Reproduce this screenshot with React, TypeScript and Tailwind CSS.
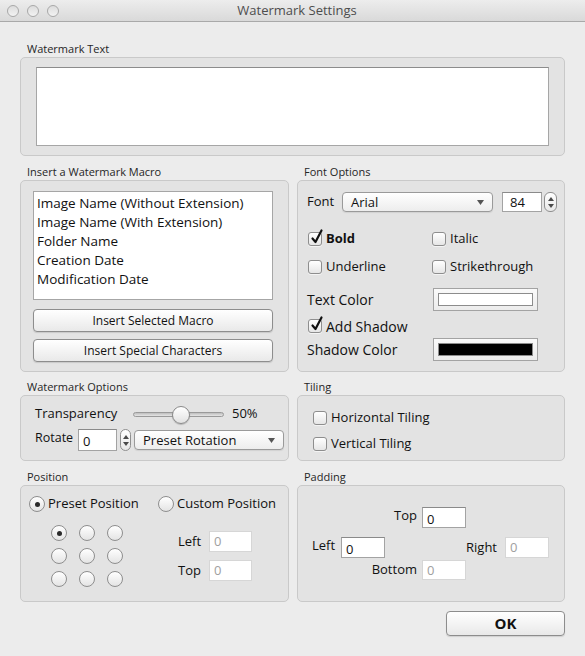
import React from 'react';

// --- Small Aqua-ish controls ---

const Checkbox: React.FC<{ checked?: boolean }> = ({ checked }) => (
  <span className="relative inline-block w-[14px] h-[14px] shrink-0 rounded-[3px] border border-[#8e8e8e] bg-gradient-to-b from-white to-[#e6e6e6] shadow-[0_1px_0_rgba(255,255,255,0.6)]">
    {checked && (
      <svg className="absolute left-[1px] top-[-4px]" width="14" height="16" viewBox="0 0 14 16">
        <path d="M2.5 9.5 L5.5 13 L11.5 1.5" fill="none" stroke="#111" strokeWidth="2.2" strokeLinecap="round" strokeLinejoin="round" />
      </svg>
    )}
  </span>
);

const Radio: React.FC<{ checked?: boolean }> = ({ checked }) => (
  <span className="inline-flex items-center justify-center w-[16px] h-[16px] shrink-0 rounded-full border border-[#8e8e8e] bg-gradient-to-b from-white to-[#e4e4e4]">
    {checked && <span className="w-[5px] h-[5px] rounded-full bg-[#2a2a2a]" />}
  </span>
);

const Stepper: React.FC<{ className?: string }> = ({ className = '' }) => (
  <span className={`flex flex-col items-center justify-center gap-[3px] rounded-[6px] border border-[#8f8f8f] bg-gradient-to-b from-white to-[#e8e8e8] ${className}`}>
    <svg width="6" height="4" viewBox="0 0 6 4"><path d="M0 4 L3 0 L6 4 Z" fill="#4a4a4a" /></svg>
    <svg width="6" height="4" viewBox="0 0 6 4"><path d="M0 0 L3 4 L6 0 Z" fill="#4a4a4a" /></svg>
  </span>
);

const Popup: React.FC<{ label: string; className?: string }> = ({ label, className = '' }) => (
  <span className={`flex items-center justify-between pl-[8px] pr-[8px] rounded-[4px] border border-[#9a9a9a] bg-gradient-to-b from-white to-[#ededed] shadow-[0_1px_1px_rgba(0,0,0,0.08)] text-[13px] leading-none text-[#111] ${className}`}>
    <span>{label}</span>
    <svg width="7" height="5" viewBox="0 0 7 5"><path d="M0 0 L7 0 L3.5 5 Z" fill="#555" /></svg>
  </span>
);

const Field: React.FC<{ value: string; disabled?: boolean; className?: string }> = ({ value, disabled, className = '' }) => (
  <span
    className={`flex items-center pl-[4px] bg-white border text-[13px] leading-none ${
      disabled
        ? 'border-[#d6d6d6] text-[#a0a0a0]'
        : 'border-[#a3a3a3] border-t-[#8a8a8a] text-[#111]'
    } ${className}`}
  >
    {value}
  </span>
);

const ColorWell: React.FC<{ color: string }> = ({ color }) => (
  <span className="flex items-center justify-center w-[105px] h-[23px] border border-[#a3a3a3] bg-gradient-to-b from-[#fafafa] to-[#ececec]">
    <span className="w-[95px] h-[13px] border border-[#8c8c8c]" style={{ backgroundColor: color }} />
  </span>
);

const Button: React.FC<{ label: string; className?: string }> = ({ label, className = '' }) => (
  <span className={`flex items-center justify-center rounded-[4px] border border-[#8d8d8d] bg-gradient-to-b from-white to-[#e9e9e9] shadow-[0_1px_1px_rgba(0,0,0,0.12)] text-[#111] ${className}`}>
    {label}
  </span>
);

// --- Group box with caption ---

const Group: React.FC<{ label: string; className?: string; boxClass?: string; children?: React.ReactNode }> = ({
  label,
  className = '',
  boxClass = '',
  children,
}) => (
  <div className={`flex flex-col ${className}`}>
    <div className="h-[16px] pl-[7px] text-[11px] leading-[16px] text-[#262626]">{label}</div>
    <div className={`rounded-[5px] border border-[#c9c9c9] bg-[#e3e3e3] ${boxClass}`}>{children}</div>
  </div>
);

const MACROS = [
  'Image Name (Without Extension)',
  'Image Name (With Extension)',
  'Folder Name',
  'Creation Date',
  'Modification Date',
];

export default function App() {
  return (
    <div
      className="w-[585px] h-[656px] bg-[#ececec] flex flex-col text-[#111] overflow-hidden"
      style={{ fontFamily: '"Open Sans", "DejaVu Sans", sans-serif' }}
    >
      {/* Title bar */}
      <div className="relative h-[22px] shrink-0 flex items-center border-b border-[#a9a9a9] bg-gradient-to-b from-[#ededed] to-[#d9d9d9]">
        <div className="flex items-center gap-[8px] pl-[7px]">
          {[0, 1, 2].map((i) => (
            <span key={i} className="w-[12px] h-[12px] rounded-full border border-[#a8a8a8] bg-gradient-to-b from-[#dcdcdc] to-[#f3f3f3]" />
          ))}
        </div>
        <div className="flex-1 text-center pr-[50px] text-[13px] leading-none text-[#4d4d4d]">Watermark Settings</div>
      </div>

      <div className="flex flex-col px-[20px] pt-[19px]">
        {/* Watermark Text */}
        <Group label="Watermark Text" boxClass="h-[99px] pl-[15px] pr-[15px] pt-[9px]">
          <div className="h-[79px] bg-white border border-[#a6a6a6] border-t-[#8c8c8c]" />
        </Group>

        {/* Macro + Font options */}
        <div className="flex gap-[8px] mt-[8px]">
          <Group label="Insert a Watermark Macro" className="w-[269px]" boxClass="h-[192px] pl-[12px] pt-[10px]">
            <div className="w-[240px] h-[109px] bg-white border border-[#a6a6a6] pt-[2px] pl-[3px]">
              {MACROS.map((m) => (
                <div key={m} className="h-[19px] text-[13.5px] leading-[19px] whitespace-nowrap">
                  {m}
                </div>
              ))}
            </div>
            <Button label="Insert Selected Macro" className="w-[240px] h-[23px] mt-[9px] text-[12px]" />
            <Button label="Insert Special Characters" className="w-[240px] h-[23px] mt-[7px] text-[12px]" />
          </Group>

          <Group label="Font Options" className="w-[268px]" boxClass="h-[192px] pl-[9px] pt-[11px]">
            <div className="flex items-center h-[20px]">
              <span className="w-[35px] text-[13px]">Font</span>
              <Popup label="Arial" className="w-[151px] h-[20px]" />
              <Field value="84" className="w-[40px] h-[20px] ml-[9px] pl-[7px]" />
              <Stepper className="w-[13px] h-[20px] ml-[2px]" />
            </div>
            <div className="flex items-center h-[20px] mt-[17px]">
              <span className="w-[125px] flex items-center gap-[4px] pl-[1px] text-[13px]">
                <Checkbox checked />
                <span className="font-bold">Bold</span>
              </span>
              <span className="flex items-center gap-[4px] text-[13px]">
                <Checkbox />
                <span>Italic</span>
              </span>
            </div>
            <div className="flex items-center h-[20px] mt-[8px]">
              <span className="w-[125px] flex items-center gap-[4px] pl-[1px] text-[13px]">
                <Checkbox />
                <span>Underline</span>
              </span>
              <span className="flex items-center gap-[4px] text-[13px]">
                <Checkbox />
                <span>Strikethrough</span>
              </span>
            </div>
            <div className="flex items-center h-[23px] mt-[11px]">
              <span className="w-[126px] text-[14px]">Text Color</span>
              <ColorWell color="#ffffff" />
            </div>
            <div className="flex items-center h-[20px] mt-[5px] gap-[4px] pl-[1px] text-[14px]">
              <Checkbox checked />
              <span>Add Shadow</span>
            </div>
            <div className="flex items-center h-[23px] mt-[2px]">
              <span className="w-[126px] text-[14px]">Shadow Color</span>
              <ColorWell color="#000000" />
            </div>
          </Group>
        </div>

        {/* Watermark options + Tiling */}
        <div className="flex gap-[8px] mt-[7px]">
          <Group label="Watermark Options" className="w-[269px]" boxClass="h-[66px] pl-[14px] pt-[8px]">
            <div className="flex items-center h-[20px]">
              <span className="w-[98px] text-[13px]">Transparency</span>
              <span className="relative w-[91px] h-[5px] rounded-full border border-[#9a9a9a] bg-gradient-to-b from-[#bdbdbd] to-[#e6e6e6]">
                <span className="absolute left-[38px] top-[-7px] w-[18px] h-[18px] rounded-full border border-[#8a8a8a] bg-gradient-to-b from-white to-[#e2e2e2] shadow-[0_1px_1px_rgba(0,0,0,0.2)]" />
              </span>
              <span className="ml-[8px] text-[13px]">50%</span>
            </div>
            <div className="flex items-center h-[22px] mt-[5px]">
              <span className="w-[43px] text-[12.5px] leading-none -mt-[3px]">Rotate</span>
              <Field value="0" className="w-[39px] h-[22px] pt-[3px]" />
              <Stepper className="w-[11px] h-[22px] ml-[3px]" />
              <Popup label="Preset Rotation" className="w-[150px] h-[20px] ml-[3px]" />
            </div>
          </Group>

          <Group label="Tiling" className="w-[268px]" boxClass="h-[66px] pl-[15px] pt-[12px]">
            <div className="flex items-center h-[20px] gap-[4px] text-[13px]">
              <Checkbox />
              <span>Horizontal Tiling</span>
            </div>
            <div className="flex items-center h-[20px] mt-[6px] gap-[4px] text-[13px]">
              <Checkbox />
              <span>Vertical Tiling</span>
            </div>
          </Group>
        </div>

        {/* Position + Padding */}
        <div className="flex gap-[8px] mt-[8px]">
          <Group label="Position" className="w-[269px]" boxClass="h-[117px] pl-[8px] pt-[8px]">
            <div className="flex items-center h-[20px] text-[13px]">
              <span className="w-[129px] flex items-center gap-[3px]">
                <Radio checked />
                <span>Preset Position</span>
              </span>
              <span className="flex items-center gap-[3px]">
                <Radio />
                <span>Custom Position</span>
              </span>
            </div>
            <div className="flex mt-[11px]">
              <div className="grid grid-cols-[16px_16px_16px] gap-x-[12px] gap-y-[7px] ml-[22px]">
                {Array.from({ length: 9 }).map((_, i) => (
                  <Radio key={i} checked={i === 0} />
                ))}
              </div>
              <div className="flex flex-col ml-[55px] mt-[6px] text-[13px]">
                <div className="flex items-center h-[21px]">
                  <span className="w-[31px]">Left</span>
                  <Field value="0" disabled className="w-[43px] h-[21px]" />
                </div>
                <div className="flex items-center h-[21px] mt-[8px]">
                  <span className="w-[31px]">Top</span>
                  <Field value="0" disabled className="w-[43px] h-[21px]" />
                </div>
              </div>
            </div>
          </Group>

          <Group label="Padding" className="w-[268px]" boxClass="h-[117px] pt-[21px] text-[13px]">
            <div className="flex items-center h-[21px]">
              <span className="w-[119px] text-right -mt-[3px]">Top</span>
              <Field value="0" className="w-[44px] h-[21px] ml-[5px] pt-[3px]" />
            </div>
            <div className="flex items-center h-[21px] mt-[9px] pl-[14px]">
              <span className="w-[29px] -mt-[3px]">Left</span>
              <Field value="0" className="w-[44px] h-[21px] pt-[3px]" />
              <span className="w-[120px] text-right pr-[8px]">Right</span>
              <Field value="0" disabled className="w-[44px] h-[21px]" />
            </div>
            <div className="flex items-center h-[20px] mt-[2px]">
              <span className="w-[119px] text-right">Bottom</span>
              <Field value="0" disabled className="w-[44px] h-[20px] ml-[5px]" />
            </div>
          </Group>
        </div>

        {/* OK */}
        <div className="flex justify-end mt-[9px]">
          <Button label="OK" className="w-[119px] h-[25px] text-[15px] font-bold" />
        </div>
      </div>
    </div>
  );
}
